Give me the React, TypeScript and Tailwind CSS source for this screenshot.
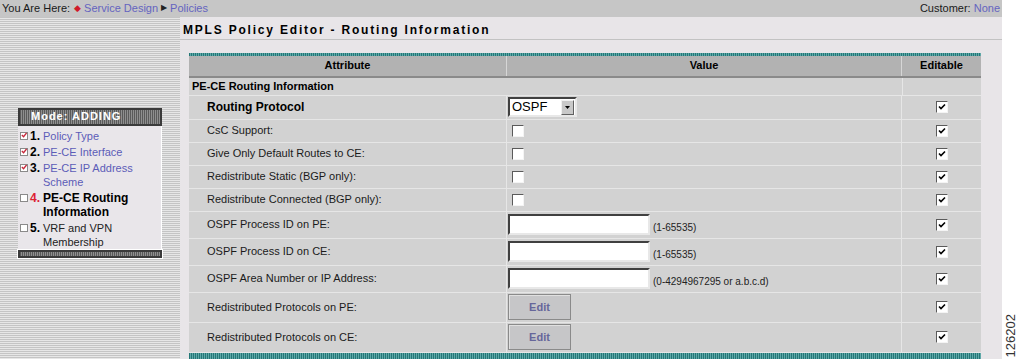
import React from "react";

const F = { fontFamily: '"Liberation Sans", Arial, sans-serif' };

function Check({ checked }: { checked?: boolean }) {
  return (
    <span className="inline-flex h-[12px] w-[12px] items-center justify-center border border-t-[#5a5a5a] border-l-[#5a5a5a] border-b-[#f4f4f4] border-r-[#f4f4f4] bg-white">
      {checked && (
        <svg width="8" height="8" viewBox="0 0 8 8">
          <path d="M1 3.5 L3 5.5 L7 1.5" stroke="#000" strokeWidth="1.6" fill="none" />
        </svg>
      )}
    </span>
  );
}

function TextInput() {
  return <span className="block h-[21px] w-[142px] border-2 border-t-[#404040] border-l-[#404040] border-b-[#e8e8e8] border-r-[#e8e8e8] bg-white" />;
}

function EditBtn() {
  return (
    <span className="flex h-[26px] w-[63px] items-center justify-center border border-[#8a8a8a] bg-[#c6c6c8] text-[11px] font-bold text-[#66669a] shadow-[inset_1px_1px_0_#e0e0e0]">
      Edit
    </span>
  );
}

type Row = {
  label: string;
  h: string;
  bold?: boolean;
  value: React.ReactNode;
};

const hint = (t: string) => (
  <span className="ml-[3px] mt-[5px] text-[10px] text-[#222]">{t}</span>
);

const rows: Row[] = [
  {
    label: "Routing Protocol",
    h: "h-[24px]",
    bold: true,
    value: (
      <span className="flex h-[20px] w-[69px] items-center justify-between border-2 border-t-[#404040] border-l-[#404040] border-b-[#e8e8e8] border-r-[#e8e8e8] bg-white pl-[2px] pr-[1px]">
        <span className="text-[13px] text-black">OSPF</span>
        <span className="flex h-[15px] w-[13px] items-center justify-center border border-t-[#f0f0f0] border-l-[#f0f0f0] border-b-[#606060] border-r-[#606060] bg-[#c8c8c8]">
          <svg width="5" height="3" viewBox="0 0 5 3">
            <path d="M0 0 H5 L2.5 3 Z" fill="#000" />
          </svg>
        </span>
      </span>
    ),
  },
  { label: "CsC Support:", h: "h-[23px]", value: <span className="ml-[4px] flex"><Check /></span> },
  { label: "Give Only Default Routes to CE:", h: "h-[23px]", value: <span className="ml-[4px] flex"><Check /></span> },
  { label: "Redistribute Static (BGP only):", h: "h-[23px]", value: <span className="ml-[4px] flex"><Check /></span> },
  { label: "Redistribute Connected (BGP only):", h: "h-[23px]", value: <span className="ml-[4px] flex"><Check /></span> },
  { label: "OSPF Process ID on PE:", h: "h-[27px]", value: <span className="flex items-center"><TextInput />{hint("(1-65535)")}</span> },
  { label: "OSPF Process ID on CE:", h: "h-[27px]", value: <span className="flex items-center"><TextInput />{hint("(1-65535)")}</span> },
  { label: "OSPF Area Number or IP Address:", h: "h-[27px]", value: <span className="flex items-center"><TextInput />{hint("(0-4294967295 or a.b.c.d)")}</span> },
  { label: "Redistributed Protocols on PE:", h: "h-[30px]", value: <EditBtn /> },
  { label: "Redistributed Protocols on CE:", h: "h-[30px]", value: <EditBtn /> },
];

const teal =
  "bg-[repeating-linear-gradient(to_right,#237777_0px,#237777_1px,#5fa8a8_1px,#5fa8a8_2px)]";

function SideItem({
  n,
  done,
  current,
  lines,
}: {
  n: number;
  done?: boolean;
  current?: boolean;
  lines: string[];
}) {
  return (
    <div className="flex items-start">
      <span className="mt-[3px] flex h-[8px] w-[8px] shrink-0 items-center justify-center border border-[#8a8a8a] bg-white">
        {done && (
          <svg width="7" height="7" viewBox="0 0 7 7">
            <path d="M1 3 L3 5 L6.5 0.5" stroke="#c8283c" strokeWidth="1.6" fill="none" />
          </svg>
        )}
      </span>
      <span className={`ml-[2px] w-[13px] shrink-0 text-[12px] font-bold ${current ? "text-[#dd2233]" : "text-black"}`}>
        {n}.
      </span>
      <span
        className={`text-[11px] ${
          current ? "text-[12px] font-bold text-black" : done ? "text-[#5c5cb8]" : "text-[#222]"
        }`}
      >
        {lines.map((l) => (
          <span key={l} className="block">
            {l}
          </span>
        ))}
      </span>
    </div>
  );
}

export default function App() {
  return (
    <div className="flex h-[359px] w-[1020px] overflow-hidden bg-white" style={F}>
      <div className="flex w-[1002px] flex-col">
        {/* top bar */}
        <div className="flex h-[17px] items-center justify-between bg-[#c6c6c6] pl-[2px] pr-[2px] text-[11px] text-[#1a1a1a]">
          <div className="flex items-center">
            <span>You Are Here:</span>
            <span className="ml-[4px] mr-[3px] text-[9px] text-[#d01a2a]">◆</span>
            <span className="text-[#6464c0]">Service Design</span>
            <span className="mx-[3px] text-[8px] text-[#222]">▶</span>
            <span className="text-[#6464c0]">Policies</span>
          </div>
          <div>
            Customer: <span className="text-[#6464c0]">None</span>
          </div>
        </div>

        <div className="flex flex-1">
          {/* sidebar */}
          <div className="w-[180px] shrink-0 bg-[repeating-linear-gradient(to_bottom,#c4c4c4_0px,#c4c4c4_1px,#e6e6e6_1px,#e6e6e6_2px)] pl-[18px] pt-[91px]">
            <div className="w-[144px] bg-[#e9e6ea]">
              <div className="flex h-[18px] items-center border-2 border-[#3a3a3a] bg-[repeating-linear-gradient(to_right,#5a5a5a_0px,#5a5a5a_1px,#8e8e8e_1px,#8e8e8e_2px)] pl-[11px]">
                <span className="text-[11px] font-bold tracking-[1px] text-white">Mode: ADDING</span>
              </div>
              <div className="flex flex-col gap-[2px] border-r border-white pb-[1px] pl-[2px] pt-[3px] leading-[14px]">
                <SideItem n={1} done lines={["Policy Type"]} />
                <SideItem n={2} done lines={["PE-CE Interface"]} />
                <SideItem n={3} done lines={["PE-CE IP Address", "Scheme"]} />
                <SideItem n={4} current lines={["PE-CE Routing", "Information"]} />
                <SideItem n={5} lines={["VRF and VPN", "Membership"]} />
              </div>
              <div className="h-[8px] border-2 border-[#3a3a3a] bg-[repeating-linear-gradient(to_right,#5a5a5a_0px,#5a5a5a_1px,#8e8e8e_1px,#8e8e8e_2px)] outline outline-1 outline-white" />
            </div>
          </div>

          {/* main */}
          <div className="flex flex-1 flex-col bg-[#e8e5e8]">
            <div className="flex h-[23px] items-center border-b border-[#c2c2c2] pl-[3px] pt-[4px]">
              <span className="text-[12px] font-bold tracking-[1.8px] text-black">
                MPLS Policy Editor - Routing Information
              </span>
            </div>
            <div className="ml-[9px] mt-[13px] w-[792px]">
              <div className={`h-[3px] ${teal}`} />
              <div className="grid h-[22px] grid-cols-[318px_395px_79px] border-b-2 border-[#8a8a8a] bg-[#b2b2b2] text-[11px] font-bold text-black">
                <div className="flex items-center justify-center border-r border-[#d6d6d6]">Attribute</div>
                <div className="flex items-center justify-center border-r border-[#d6d6d6]">Value</div>
                <div className="flex items-center justify-center">Editable</div>
              </div>
              <div className="grid h-[18px] grid-cols-[713px_79px] border-b border-[#e6e6e6] bg-[#d2d2d2] text-[11px] font-bold text-black">
                <div className="flex items-center pl-[3px]">PE-CE Routing Information</div>
                <div className="border-l border-[#e6e6e6]" />
              </div>
              {rows.map((r) => (
                <div
                  key={r.label}
                  className={`grid ${r.h} grid-cols-[318px_395px_79px] border-b border-[#e6e6e6] bg-[#d2d2d2] text-[11px] text-[#1a1a1a]`}
                >
                  <div className={`flex items-center border-r border-[#e6e6e6] pl-[18px] ${r.bold ? "text-[12px] font-bold text-black" : ""}`}>
                    {r.label}
                  </div>
                  <div className="flex items-center border-r border-[#e6e6e6] pl-[1px]">{r.value}</div>
                  <div className="flex items-center justify-center">
                    <Check checked />
                  </div>
                </div>
              ))}
              <div className={`h-[8px] ${teal}`} />
            </div>
          </div>
        </div>
      </div>
      <div className="flex w-[18px] flex-col items-center justify-end pb-[2px]">
        <span className="rotate-180 text-[13px] text-[#333] [writing-mode:vertical-rl]">126202</span>
      </div>
    </div>
  );
}
